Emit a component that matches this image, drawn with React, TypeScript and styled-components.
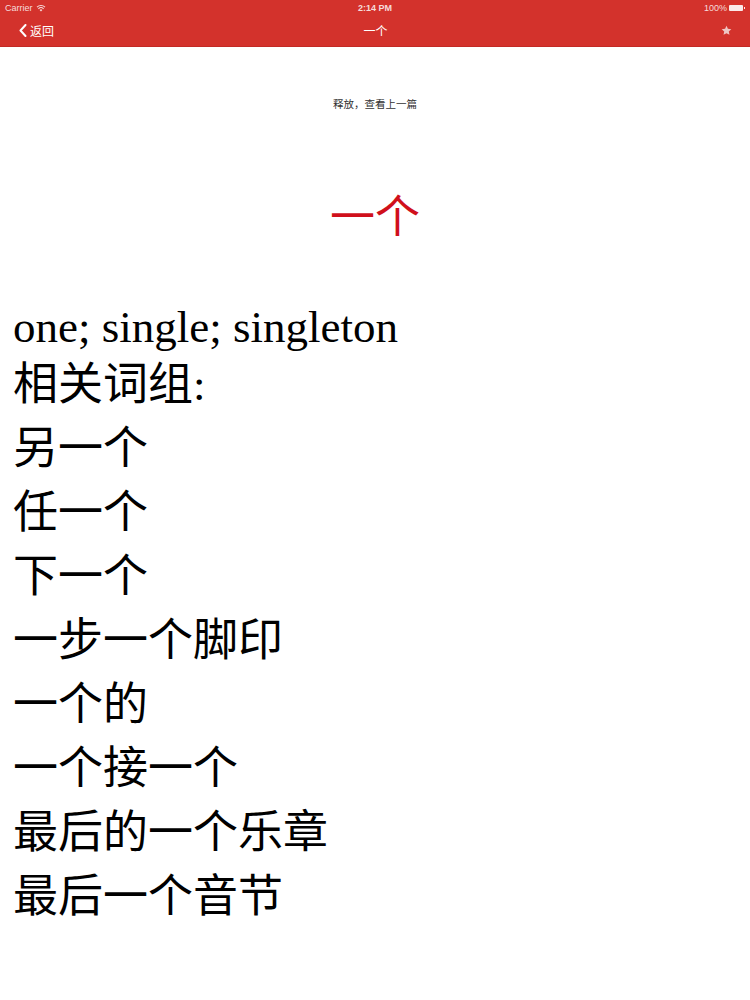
import React from "react";
import styled, { createGlobalStyle } from "styled-components";

const GlobalStyle = createGlobalStyle`
  html, body { margin: 0; padding: 0; background: #ffffff; }
  body { font-family: "Liberation Sans", "Noto Sans CJK SC", sans-serif; }
`;

const Page = styled.div`
  width: 750px;
  min-height: 1000px;
  background: #fff;
`;

const Header = styled.header`
  background: #d3322c;
  border-bottom: 1px solid #c22a25;
  color: #fff;
`;

const StatusBar = styled.div`
  height: 15px;
  display: grid;
  grid-template-columns: 1fr auto 1fr;
  align-items: center;
  padding: 0 5px;
  font-size: 9px;
  font-family: "Liberation Sans", sans-serif;
  color: #f6dcdb;
`;

const StatusLeft = styled.div`
  display: flex;
  align-items: center;
  gap: 3px;
`;

const StatusCenter = styled.div`
  font-weight: 700;
`;

const StatusRight = styled.div`
  display: flex;
  align-items: center;
  justify-content: flex-end;
  gap: 2px;
`;

const Battery = styled.span`
  display: inline-block;
  width: 14px;
  height: 6px;
  background: #fbeaea;
  border-radius: 1px;
  position: relative;
  margin-right: 2px;
  &::after {
    content: "";
    position: absolute;
    right: -2px;
    top: 2px;
    width: 1px;
    height: 2px;
    background: #fbeaea;
  }
`;

const NavBar = styled.div`
  height: 31px;
  display: grid;
  grid-template-columns: 1fr auto 1fr;
  align-items: center;
  padding: 0 18px 0 19px;
`;

const BackButton = styled.div`
  display: flex;
  align-items: center;
  gap: 3px;
  font-size: 12px;
  color: #fff;
  font-family: "Noto Sans CJK SC", sans-serif;
`;

const NavTitle = styled.div`
  font-size: 12px;
  font-family: "Noto Sans CJK SC", sans-serif;
  color: #fff;
`;

const NavRight = styled.div`
  display: flex;
  justify-content: flex-end;
`;

const Body = styled.main`
  display: flex;
  flex-direction: column;
`;

const PullHint = styled.div`
  margin-top: 49px;
  text-align: center;
  font-size: 10.5px;
  line-height: 16px;
  color: #333;
  font-family: "Noto Sans CJK SC", sans-serif;
`;

const WordTitle = styled.h1`
  margin: 70px 0 0;
  text-align: center;
  font-size: 45px;
  font-weight: 400;
  line-height: 64px;
  color: #d0101b;
  font-family: "Noto Sans CJK SC", sans-serif;
`;

const Definition = styled.div`
  margin-top: 55px;
  padding-left: 13px;
  font-family: "Liberation Serif", "Noto Sans CJK SC", serif;
  font-size: 45px;
  font-weight: 400;
  color: #000;
`;

const Line = styled.div<{ $h?: number }>`
  line-height: ${(p) => p.$h ?? 64}px;
  white-space: nowrap;
`;

const phrases = [
  "另一个",
  "任一个",
  "下一个",
  "一步一个脚印",
  "一个的",
  "一个接一个",
  "最后的一个乐章",
  "最后一个音节",
];

export default function App() {
  return (
    <>
      <GlobalStyle />
      <Page>
        <Header>
          <StatusBar>
            <StatusLeft>
              <span>Carrier</span>
              <svg width="10" height="8" viewBox="0 0 10 8">
                <path d="M5 7.5 L3.6 6 A2 2 0 0 1 6.4 6 Z" fill="#f6dcdb" />
                <path d="M2.4 4.8 A3.7 3.7 0 0 1 7.6 4.8" stroke="#f6dcdb" strokeWidth="1.1" fill="none" />
                <path d="M1 3.2 A5.7 5.7 0 0 1 9 3.2" stroke="#f6dcdb" strokeWidth="1.1" fill="none" />
              </svg>
            </StatusLeft>
            <StatusCenter>2:14 PM</StatusCenter>
            <StatusRight>
              <span>100%</span>
              <Battery />
            </StatusRight>
          </StatusBar>
          <NavBar>
            <BackButton>
              <svg width="8" height="13" viewBox="0 0 8 13">
                <path d="M6.5 1 L1.5 6.5 L6.5 12" stroke="#fff" strokeWidth="2" fill="none" strokeLinecap="round" strokeLinejoin="round" />
              </svg>
              <span>返回</span>
            </BackButton>
            <NavTitle>一个</NavTitle>
            <NavRight>
              <svg width="11" height="11" viewBox="0 0 24 24">
                <path d="M12 1.5 L15.1 8.3 L22.5 9.1 L17 14.1 L18.5 21.5 L12 17.8 L5.5 21.5 L7 14.1 L1.5 9.1 L8.9 8.3 Z" fill="#eec6c4" />
              </svg>
            </NavRight>
          </NavBar>
        </Header>
        <Body>
          <PullHint>释放，查看上一篇</PullHint>
          <WordTitle>一个</WordTitle>
          <Definition>
            <Line $h={52}>one; single; singleton</Line>
            <Line>相关词组:</Line>
            {phrases.map((p) => (
              <Line key={p}>{p}</Line>
            ))}
          </Definition>
        </Body>
      </Page>
    </>
  );
}
